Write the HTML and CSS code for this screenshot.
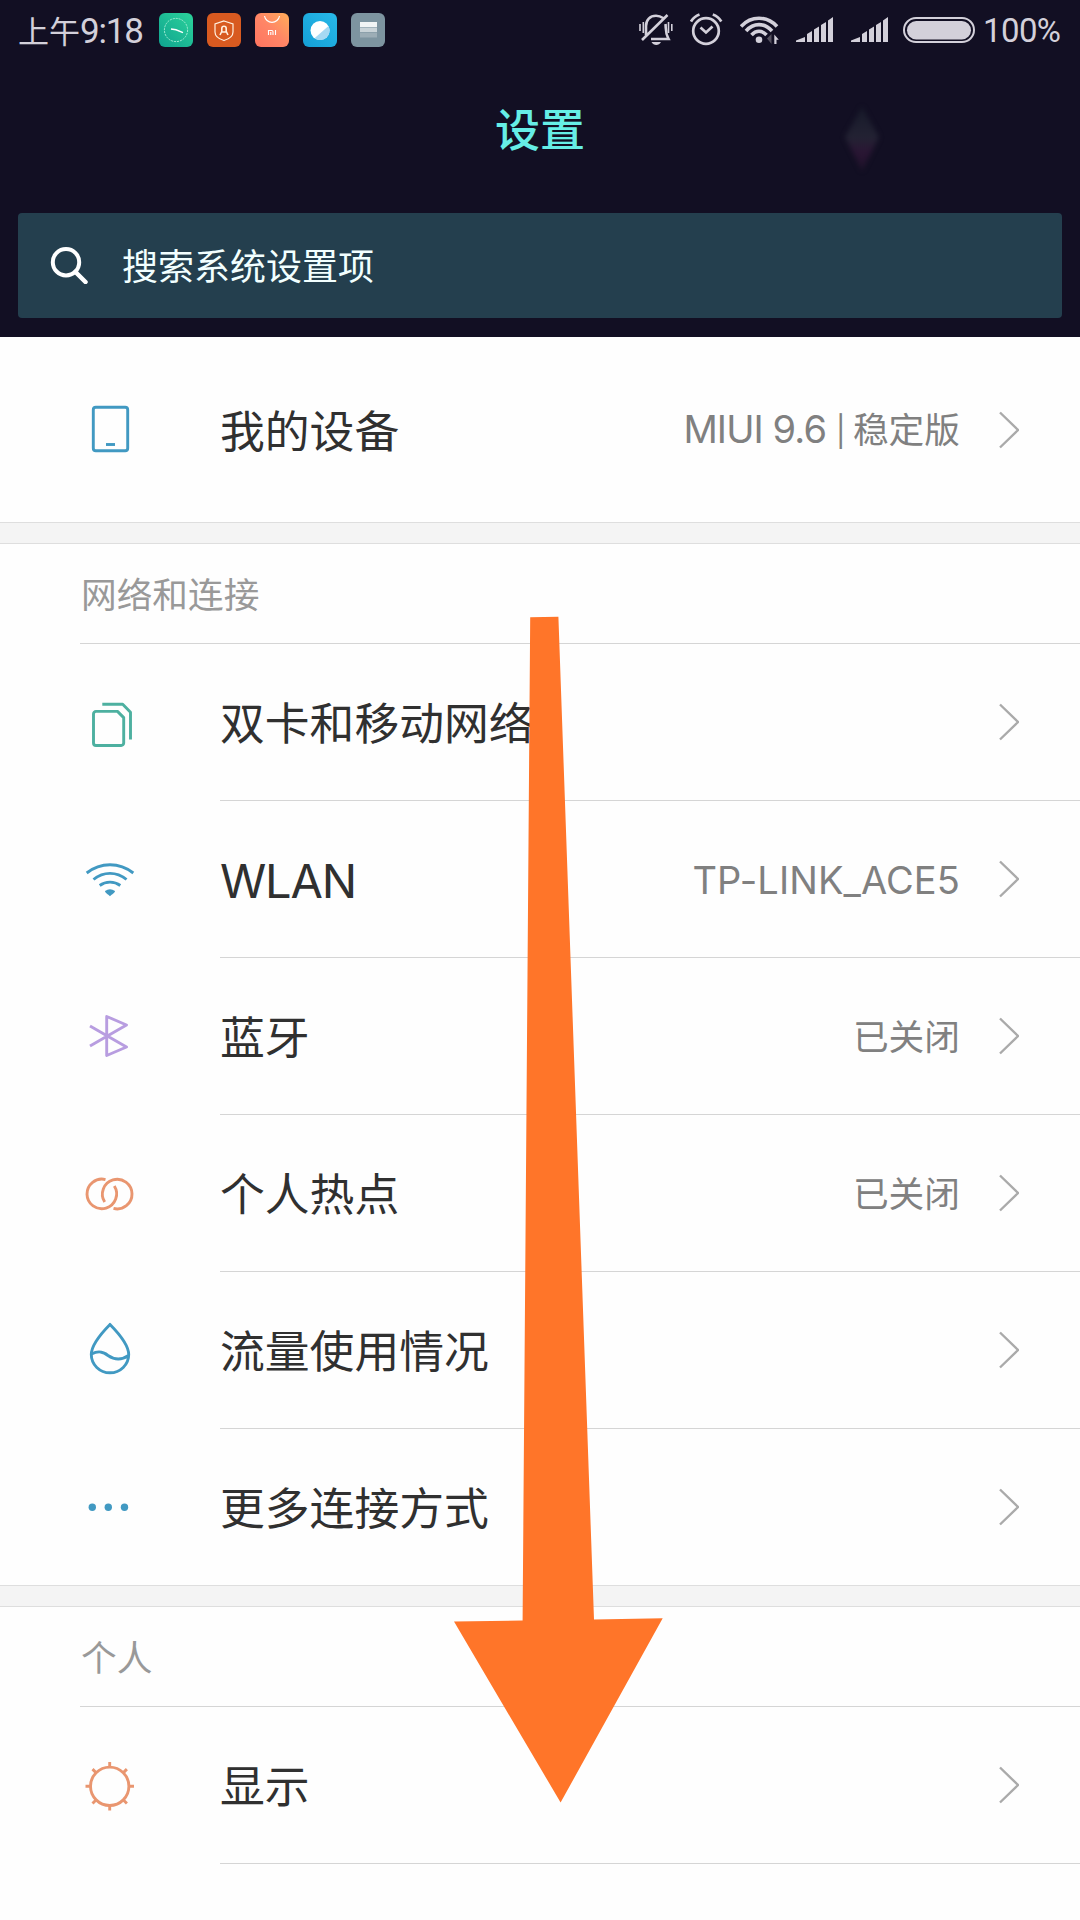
FILE: index.html
```html
<!DOCTYPE html>
<html lang="zh-CN">
<head>
<meta charset="utf-8">
<title>设置</title>
<link rel="stylesheet" href="styles.css">
</head>
<body>
<div class="screen">
  <header class="header">
    <div class="status">
      <span class="time">上午<span class="digits">9:18</span></span>
      <div class="apps">
        <svg class="app" viewBox="0 0 34 34">
          <defs><linearGradient id="g1" x1="0" y1="1" x2="1" y2="0"><stop offset="0" stop-color="#0fa38f"/><stop offset="1" stop-color="#2cd39b"/></linearGradient></defs>
          <rect width="34" height="34" rx="6" fill="url(#g1)"/>
          <circle cx="17" cy="17" r="11.6" fill="none" stroke="#a5ecd5" stroke-width="1" stroke-dasharray="2 1"/>
          <path d="M12 16l5 .8 7 2.8" fill="none" stroke="#fff" stroke-width="1.4"/>
        </svg>
        <svg class="app" viewBox="0 0 34 34">
          <rect width="34" height="34" rx="6" fill="#d85a20"/>
          <path d="M17 8l9 3v8c0 4-4 7-9 8.500c-5-1.500-9-4.500-9-8.500v-8z" fill="none" stroke="#fff0e0" stroke-width="1.2"/>
          <path d="M13 22l1.500-3h5l1.500 3M14.800 19v-3.500a2.200 2.200 0 0 1 4.400 0V19" fill="none" stroke="#fff0e0" stroke-width="1.600"/>
        </svg>
        <svg class="app" viewBox="0 0 34 34">
          <defs><linearGradient id="g3" x1="0" y1="1" x2="1" y2="0"><stop offset="0" stop-color="#ff7460"/><stop offset=".5" stop-color="#ff8566"/><stop offset="1" stop-color="#ffad58"/></linearGradient></defs>
          <rect width="34" height="34" rx="6" fill="url(#g3)"/>
          <path d="M9.500 3a7.600 7.600 0 0 0 15 0" fill="none" stroke="#fff" stroke-width="1.200"/>
          <path d="M13.500 22v-4.500h3.200c1 0 1.300.5 1.300 1.300V22M15.800 19v3M20.500 17v5" fill="none" stroke="#fff" stroke-width="1.100"/>
        </svg>
        <svg class="app" viewBox="0 0 34 34">
          <defs><linearGradient id="g4" x1="0" y1="1" x2="1" y2="0"><stop offset="0" stop-color="#149fd6"/><stop offset="1" stop-color="#28b9e8"/></linearGradient></defs>
          <rect width="34" height="34" rx="6" fill="url(#g4)"/>
          <circle cx="17" cy="17.500" r="9.500" fill="#fff"/>
          <path d="M25.500 13a9.500 9.500 0 0 1-14 12.200z" fill="#a6d9f3"/>
        </svg>
        <svg class="app" viewBox="0 0 34 34">
          <rect width="34" height="34" rx="6" fill="#7d94a0"/>
          <path d="M9 9h17v5H9z" fill="#f1f4f5"/><path d="M9 14.500h17v4.500H9z" fill="#c9d3d8"/><path d="M9 19.500h17v5H9z" fill="#9cadb6"/>
        </svg>
      </div>
      <div class="indicators">
        <svg width="36" height="34" viewBox="638 13 36 34" fill="none" stroke="#d3d0da" stroke-width="2.600">
          <path d="M646 35v-9c0-6 4-10.300 10-10.300c3 0 5 .8 7 2.300M665.500 24c.5 5-.3 9 3 15h-17.500M642 40l25.500-25" />
          <path d="M640 24v7M643.300 22v11M671.800 24v7M668.500 22v11" stroke-width="1.600"/>
          <path d="M651.500 42h9.500c-2 4-7.500 4-9.500 0z" fill="#d3d0da" stroke="none"/>
        </svg>
        <svg class="alarm" width="33" height="34" viewBox="690 13 33 34" fill="none" stroke="#d3d0da" stroke-width="2.700">
          <circle cx="706" cy="31" r="12.800"/><path d="M700.500 27.500l5.500 5 6.500-6M691 21.500q3-5 8.500-7M721.300 21.500q-3-5-8.500-7"/>
        </svg>
        <svg class="wifi" width="40" height="34" viewBox="740 13 40 34" fill="none" stroke="#d3d0da" stroke-width="3.600">
          <path d="M741 26.500c10-11 26-11 36 0M746 31c7.500-8.500 18.500-8.500 26 0M751.500 35c4.500-5 10.500-5 15 0"/>
          <circle cx="759" cy="39.800" r="3.300" fill="#d3d0da" stroke="none"/>
          <path d="M771.500 34v10l-4.500-5.500z" fill="#55515f" stroke="none"/><path d="M774.300 44V34.500l4.500 5.300h-2.300V44z" fill="#d3d0da" stroke="none"/>
        </svg>
        <svg class="sig1" width="37" height="26" viewBox="0 0 37 26" fill="#d3d0da"><path d="M0 25v-1.500L9 20v5zM11 25v-8l5-3v11zM18 25V12.500l5-3V25zM25 25V8l5-3v20zM32 25V3.500L37 0v25z"/></svg>
        <svg class="sig2" width="37" height="26" viewBox="0 0 37 26" fill="#d3d0da"><path d="M0 25v-1.500L9 20v5zM11 25v-8l5-3v11zM18 25V12.500l5-3V25zM25 25V8l5-3v20zM32 25V3.500L37 0v25z"/></svg>
        <svg class="battery" width="72" height="26" viewBox="0 0 72 26"><rect x="1" y="1" width="70" height="24" rx="12" fill="none" stroke="#d3d0da" stroke-width="2"/><rect x="4" y="4" width="64" height="18.500" rx="9.200" fill="#d3d0da"/></svg>
        <span class="percent">100%</span>
      </div>
    </div>
    <svg class="gem" width="40" height="70" viewBox="0 0 40 70">
      <defs><linearGradient id="gg" x1="0" y1="0" x2="0" y2="1"><stop offset="0" stop-color="#171a2a"/><stop offset=".48" stop-color="#232233"/><stop offset=".7" stop-color="#2a1634"/><stop offset="1" stop-color="#1f122a"/></linearGradient></defs>
      <path d="M20 3l17 30-17 34L3 33z" fill="url(#gg)"/>
    </svg>
    <h1 class="title">设置</h1>
    <div class="search">
      <svg width="38" height="38" viewBox="0 0 38 38" fill="none" stroke="#fff" stroke-width="4"><circle cx="16" cy="16.200" r="13.200"/><path d="M25.500 26l10 10" stroke-width="4.500" stroke-linecap="round"/></svg>
      <span class="hint">搜索系统设置项</span>
    </div>
  </header>

  <main>
    <section class="group">
      <div class="row device">
        <svg class="icon blue" viewBox="0 0 60 61" height="61"><rect x="13.300" y="8.300" width="34.400" height="43.400" rx="2.500"/><path d="M26 45.500h9"/></svg>
        <div class="body"><span class="name">我的设备</span><span class="value"><span class="latin miui">MIUI 9.6 <span class="bar">|</span></span> 稳定版</span><svg class="chev" viewBox="0 0 20 38"><path d="M1 1.500l18 17.500L1 36.500"/></svg></div>
      </div>
    </section>

    <section class="group">
      <h2 class="label">网络和连接</h2>
      <div class="row">
        <svg class="icon green" viewBox="0 1 60 60"><path d="M16 19.400h21.500l6.200 6.200V51a2.500 2.500 0 0 1-2.500 2.500H16a2.500 2.500 0 0 1-2.500-2.500V22a2.500 2.500 0 0 1 2.500-2.600zM22.300 12.300h20.400l7.800 8v27.200"/></svg>
        <div class="body"><span class="name">双卡和移动网络</span><svg class="chev" viewBox="0 0 20 38"><path d="M1 1.500l18 17.500L1 36.500"/></svg></div>
      </div>
      <div class="row">
        <svg class="icon blue" viewBox="0 1.500 60 60"><path d="M6.700 24.500c14-11 32.600-11 46.600 0M13.500 31c10-8.200 23-8.200 33 0M19.700 37c6-4.500 14.600-4.500 20.600 0"/><path class="solid" d="M25 42.500q5-3.500 10 0c0 2-3 3-5 5.300c-2-2.300-5-3.300-5-5.300z"/></svg>
        <div class="body"><span class="name latin wlan">WLAN</span><span class="value latin ssid">TP-LINK_ACE5</span><svg class="chev" viewBox="0 0 20 38"><path d="M1 1.500l18 17.500L1 36.500"/></svg></div>
      </div>
      <div class="row">
        <svg class="icon purple" viewBox="0 1 60 60"><path d="M10 20l36.500 21-19.800 8.500v-39l19.800 8.500L10 40"/></svg>
        <div class="body"><span class="name">蓝牙</span><span class="value">已关闭</span><svg class="chev" viewBox="0 0 20 38"><path d="M1 1.500l18 17.500L1 36.500"/></svg></div>
      </div>
      <div class="row">
        <svg class="icon orange" viewBox="0 1 60 60"><path d="M25.500 16.600A14.800 14.800 0 1 0 34.300 23M33.500 45.400A14.800 14.800 0 1 0 24.700 39"/></svg>
        <div class="body"><span class="name">个人热点</span><span class="value">已关闭</span><svg class="chev" viewBox="0 0 20 38"><path d="M1 1.500l18 17.500L1 36.500"/></svg></div>
      </div>
      <div class="row">
        <svg class="icon blue" viewBox="0 1 60 60"><path d="M30 4.400C22.500 12 11.300 24.500 11.300 34.500a18.700 18.300 0 0 0 37.400 0C48.700 24.500 37.500 12 30 4.400zM11.500 34c7-3.500 11.500-2.500 16.500 1.500c6.500 4.500 14 4.500 20.500 0"/></svg>
        <div class="body"><span class="name">流量使用情况</span><svg class="chev" viewBox="0 0 20 38"><path d="M1 1.500l18 17.500L1 36.500"/></svg></div>
      </div>
      <div class="row">
        <svg class="icon blue" viewBox="0 0 60 60"><g class="solid"><circle cx="12.300" cy="30.300" r="3.700"/><circle cx="28.300" cy="30.300" r="3.700"/><circle cx="44.500" cy="30.300" r="3.700"/></g></svg>
        <div class="body"><span class="name">更多连接方式</span><svg class="chev" viewBox="0 0 20 38"><path d="M1 1.500l18 17.500L1 36.500"/></svg></div>
      </div>
    </section>

    <section class="group last">
      <h2 class="label">个人</h2>
      <div class="row">
        <svg class="icon orange" viewBox="0 1 60 60"><circle cx="29.700" cy="31.300" r="19.200"/><path d="M29.700 12V7M29.700 50.500v5M10.500 31.300h-5M49 31.300h5M16 17.600l-3.500-3.500M43.400 17.600l3.500-3.500M16 45l-3.500 3.500M43.400 45l3.500 3.500"/></svg>
        <div class="body"><span class="name">显示</span><svg class="chev" viewBox="0 0 20 38"><path d="M1 1.500l18 17.500L1 36.500"/></svg></div>
      </div>
    </section>
  </main>

  <svg class="arrow" width="210" height="1188" viewBox="453 616 210 1188"><path d="M530.200 617.300L558.400 616.700L594 1619.500L662.700 1618.300L560.600 1802.500L454 1621.600L522.600 1620.500z" fill="#ff7529"/></svg>
</div>
</body>
</html>
```
FILE: styles.css
```css
*, *::before { box-sizing: border-box; }
body { margin: 0; background: #fefefe; }
.screen {
  position: relative;
  width: 1080px;
  height: 1920px;
  overflow: hidden;
  background: #fefefe;
  color: #303030;
  font-family: "Noto Sans CJK SC", sans-serif;
  font-weight: 400;
}
svg { display: block; flex: none; }

.header {
  display: flex;
  flex-direction: column;
  height: 337px;
  background: #120f23;
}
.status {
  display: flex;
  align-items: center;
  height: 60px;
  padding: 0 19px 0 18px;
  color: #d3d0da;
}
.time { width: 141px; padding-top: 2px; font-size: 31px; line-height: 58px; white-space: nowrap; }
.digits { font-family: Roboto, sans-serif; font-size: 35px; font-weight: 400; letter-spacing: -1.2px; }
.apps { display: flex; gap: 14px; }
.app { width: 34px; height: 34px; }
.indicators { display: flex; align-items: center; margin-left: auto; }
.alarm { margin-left: 16px; }
.wifi { margin-left: 17px; }
.sig1 { margin-left: 16px; }
.sig2 { margin-left: 18px; }
.battery { margin-left: 15px; }
.percent {
  width: 78px;
  margin-left: 8px;
  padding-top: 2px;
  font: 400 33px/60px Roboto, sans-serif;
  letter-spacing: -.6px;
  white-space: nowrap;
}
.gem { position: absolute; left: 842px; top: 104px; filter: blur(2.5px); }
.title {
  height: 153px;
  margin: 0;
  color: #66eee6;
  font-size: 45px;
  font-weight: 500;
  line-height: 135px;
  text-align: center;
}
.search {
  display: flex;
  align-items: center;
  gap: 34px;
  height: 105px;
  margin: 0 18px;
  padding: 0 0 2px 32px;
  border-radius: 4px;
  background: #243f4e;
  color: #f2ffff;
  font-size: 36px;
}
.hint { padding-bottom: 2px; }

.group + .group { border-top: 22px solid #f4f4f4; position: relative; }
.group + .group::before {
  content: "";
  position: absolute;
  left: 0;
  right: 0;
  top: -22px;
  height: 22px;
  border-top: 1px solid #dedede;
  border-bottom: 1px solid #dedede;
}
.label {
  height: 100px;
  margin: 0;
  margin-left: 80px;
  padding-left: 1px;
  border-bottom: 1px solid #d5d5d5;
  color: #999;
  font-size: 35.700px;
  font-weight: 400;
  line-height: 97px;
}
.row { display: flex; height: 157px; padding-left: 80px; align-items: center; }
.row:last-child { height: 156px; }
.last .row { height: 157px; }
.row.device { height: 185px; }
.body {
  display: flex;
  flex: 1;
  align-items: center;
  height: 100%;
  margin-left: 80px;
  padding-right: 61px;
  border-bottom: 1px solid #d5d5d5;
}
.row:last-child .body { border-bottom: 0; }
.last .row:last-child .body { border-bottom: 1px solid #d5d5d5; }
.name { padding-bottom: 2px; font-size: 44.800px; line-height: 60px; white-space: nowrap; }
.value { margin-left: auto; padding-bottom: 4px; font-size: 35.700px; color: #808080; white-space: nowrap; }
.value + .chev { margin-left: 39px; }
.chev { width: 20px; height: 38px; margin-left: auto; fill: none; stroke: #aaa; stroke-width: 2.4; }
.latin { font-family: Inter, sans-serif; font-weight: 400; }
.name.wlan { padding: 3px 0 0; font-size: 47px; letter-spacing: -1.2px; }
.value.ssid { padding: 2px 0 0; font-size: 38px; letter-spacing: .1px; }
.miui { font-size: 38px; letter-spacing: -.9px; }
.bar { font-size: 30px; vertical-align: 1px; }

.icon { width: 60px; fill: none; stroke-width: 2.9; stroke-linejoin: round; }
.blue { stroke: #4199c2; }
.green { stroke: #4db0a0; }
.purple { stroke: #b89de0; }
.orange { stroke: #e99670; }
.solid { fill: #4199c2; stroke: none; }
.arrow { position: absolute; left: 453px; top: 616px; }
```
